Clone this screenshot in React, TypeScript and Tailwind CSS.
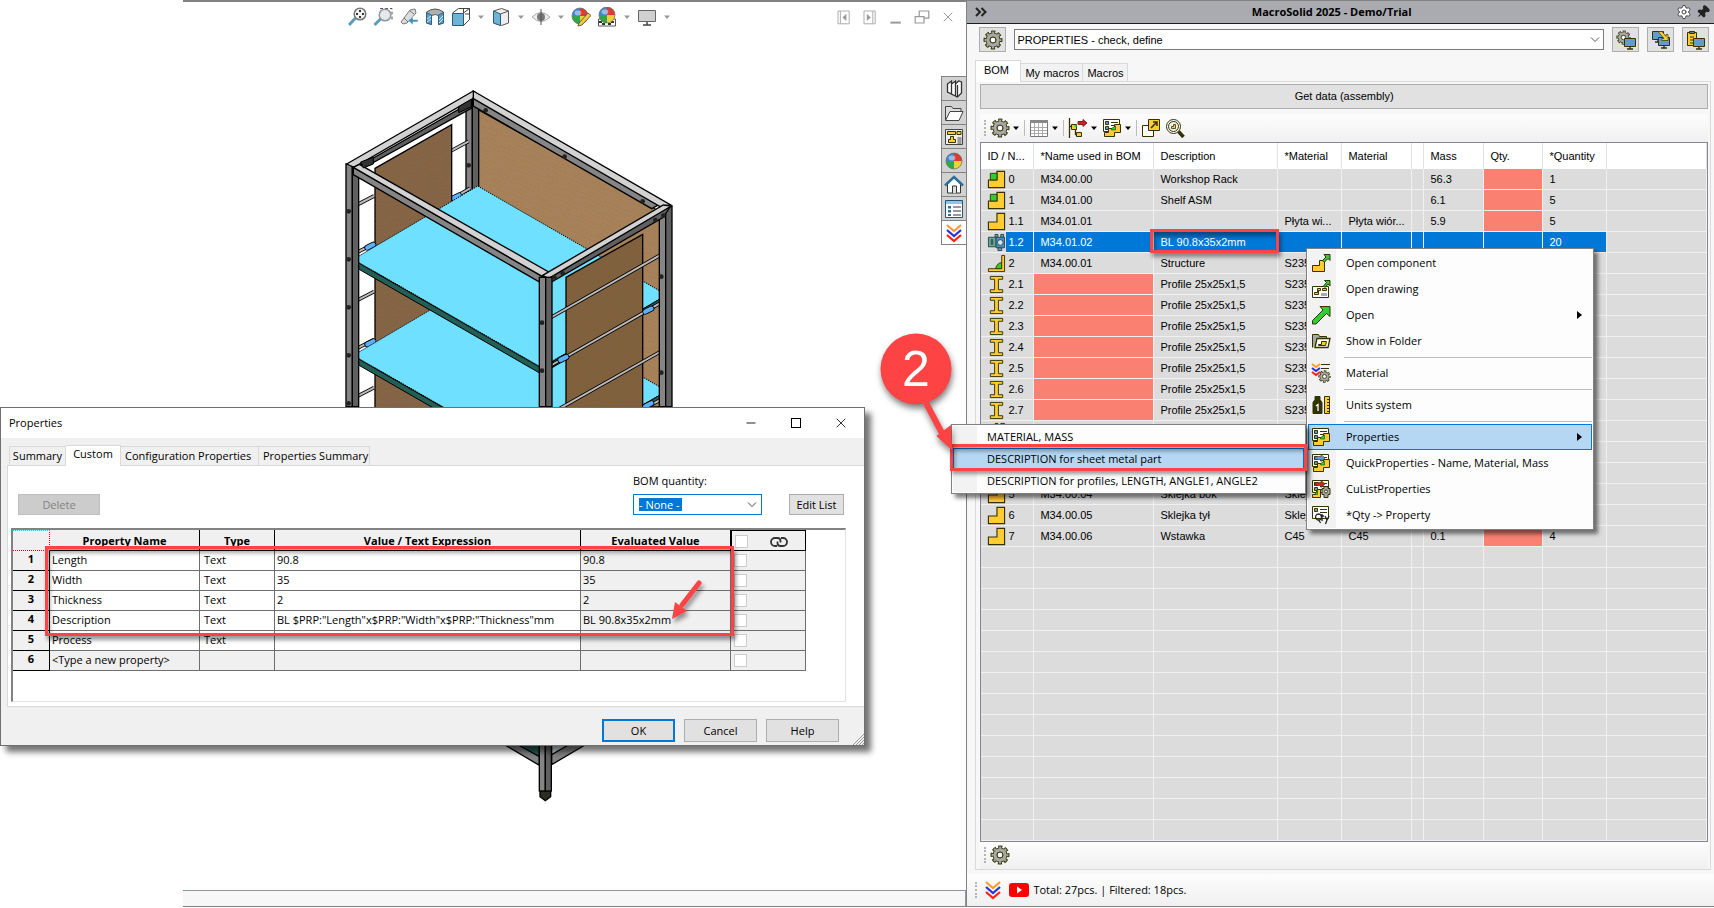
/**
 * CAD workspace: model view on the left, MacroSolid task pane docked on the right,
 * with the Properties window and the BOM context menu open above them.
 */
import type { ReactNode } from 'react';
import clsx from 'clsx';
import { Minus, Pin, Settings, X } from 'lucide-react';

const INK = '#333300';
const YELLOW = '#ffcc33';
const GREEN = '#33cc33';
const STEEL = '#6699cc';

function Icon({ children, className = 'size-5' }: { children: ReactNode; className?: string }) {
  return (
    <svg viewBox="0 0 20 20" className={clsx('shrink-0', className)} fill="none" stroke={INK} strokeWidth="1" aria-hidden="true">
      {children}
    </svg>
  );
}

/* ---------- shared glyphs ---------- */

function GearShape() {
  return (
    <g>
      <circle cx="10" cy="10" r="7.6" strokeWidth="3.8" strokeDasharray="3.8 2.17" strokeDashoffset="1.9" />
      <circle cx="10" cy="10" r="5" stroke={INK} strokeWidth="5" />
      <circle cx="10" cy="10" r="7.4" stroke="#a8a8a8" strokeWidth="2.2" strokeDasharray="2.1 3.71" strokeDashoffset="1.05" />
      <circle cx="10" cy="10" r="5" stroke="#a8a8a8" strokeWidth="3.4" />
      <circle cx="10" cy="10" r="2.9" fill="#fff" />
    </g>
  );
}

const GearIcon = ({ className }: { className?: string }) => <Icon className={className}><GearShape /></Icon>;

const Caret = ({ className = 'text-black' }: { className?: string }) => (
  <svg viewBox="0 0 8 8" className={clsx('size-2 shrink-0', className)} aria-hidden="true">
    <path d="M1 2.5h6L4 6z" fill="currentColor" />
  </svg>
);

const ChevronsIcon = ({ className }: { className?: string }) => (
  <Icon className={className}>
    <g strokeWidth="2.2">
      <path d="M3 2l7 6 7-6" stroke="#ff9933" />
      <path d="M3 7l7 6 7-6" stroke="#2233dd" />
      <path d="M3 12l7 6 7-6" stroke="#ff2211" />
    </g>
  </Icon>
);

const Monitor = ({ x, y }: { x: number; y: number }) => (
  <g transform={`translate(${x} ${y})`}>
    <path d="M.5.5h11v8H.5z" fill={STEEL} />
    <path d="M6 9v2M3 11h6" strokeWidth="1.4" />
  </g>
);

function Ball({ cx = 10, cy = 10, r = 8 }: { cx?: number; cy?: number; r?: number }) {
  return (
    <g stroke="none">
      <path d={`M${cx} ${cy}V${cy - r}A${r} ${r} 0 0 0 ${cx - r} ${cy}z`} fill="#4285d6" />
      <path d={`M${cx} ${cy}V${cy - r}A${r} ${r} 0 0 1 ${cx + r} ${cy}z`} fill="#dd3b30" />
      <path d={`M${cx} ${cy}H${cx - r}A${r} ${r} 0 0 0 ${cx} ${cy + r}z`} fill="#2fa84a" />
      <path d={`M${cx} ${cy}H${cx + r}A${r} ${r} 0 0 1 ${cx} ${cy + r}z`} fill="#f0cf3c" />
      <circle cx={cx} cy={cy} r={r} fill="none" stroke="#666" strokeWidth=".7" />
      <ellipse cx={cx - 2} cy={cy - 3} rx="3.4" ry="2.4" fill="#fff" opacity=".45" />
    </g>
  );
}

const PropertiesIcon = ({ arrow, profile }: { arrow?: string; profile?: boolean }) => (
  <Icon>
    <path d="M1.5 1.5h16v12h-16z" fill="#fff" />
    <path d="M3.5 3.5h3v3h-3zM3.5 8.5h3v3h-3z" fill={STEEL} />
    <path d="M9 4.5h7M9 7.5h5M9 10.5h4" />
    {arrow && <path d="M4 3.5h6v-2l4 3.5-4 3.5v-2H4z" fill={arrow} strokeWidth=".6" />}
    {profile ? (
      <>
        <path d="M6.5 10.5h3v8h-8v-3h3z" fill={YELLOW} />
        <path d="M3.5 15.5l3-4v4z" fill={GREEN} strokeWidth=".6" />
        <path d="M13 7.5h4v2h2v6h-2v3h-4v-3h-2v-6h2z" fill="#a8a8a8" />
        <circle cx="15" cy="12.5" r="1.5" fill="#fff" />
      </>
    ) : (
      <>
        <path d="M12.5 10.5v-4h6v8h-6v4h-10v-4h4v-4z" fill={YELLOW} />
        <path d="M9.5 10.5l4-2.5v4h-4z" fill={GREEN} strokeWidth=".6" />
      </>
    )}
  </Icon>
);

/* ---------- BOM row icons ---------- */

type RowKind = 'assembly' | 'part' | 'sheet' | 'structure' | 'profile' | 'cutlist';

function RowIcon({ kind }: { kind: RowKind }) {
  if (kind === 'profile') {
    return (
      <Icon className="size-[19px]">
        <path d="M3.5 1.5h13v3h-4.5v11h4.5v3h-13v-3H8v-11H3.5z" fill={YELLOW} />
      </Icon>
    );
  }
  if (kind === 'structure') {
    return (
      <Icon className="size-[19px]">
        <path d="M9 15.5c1-4 3-6 6.5-6.5v6.5z" fill={GREEN} />
        <path d="M1.5 15.5h14v-14h3v17h-17z" fill={YELLOW} />
      </Icon>
    );
  }
  if (kind === 'sheet') {
    return (
      <Icon className="size-[19px]">
        <path d="M8.5 1.5h3v3h-3zM14.5 1.5h3v3h-3zM11.5 15.5h4v3h-4z" fill="#6fa88a" stroke="#234a5a" />
        <path d="M1.5 4.5h8v10h-8z" fill="#6fa88a" stroke="#234a5a" />
        <path d="M9.5 4.5h9v11h-9z" fill="#4a8fc0" stroke="#234a5a" />
        <circle cx="14" cy="10" r="3" fill="#d8e4ea" stroke="#234a5a" />
        <path d="M4.5 7v5H6V7z" stroke="#234a5a" />
      </Icon>
    );
  }
  if (kind === 'cutlist') {
    return (
      <Icon className="size-[19px]">
        <path d="M8.5 1.5h3v4h3v-4h4v8h-10z" fill="#a8a8a8" />
      </Icon>
    );
  }
  return (
    <Icon className="size-[19px]">
      <path d="M10.5 1.5h8v17h-17v-8h9z" fill={YELLOW} strokeWidth="1.2" />
      {kind === 'assembly' && <path d="M3.5 3.5h7v7h-7z" fill={GREEN} />}
    </Icon>
  );
}

/* ---------- model view ---------- */

function Rack() {
  const shelf = (dy: number) => (
    <g transform={`translate(0 ${dy})`}>
      <path d="M70 538L443 318L990 633V657L634 862z" fill="#6fe0ff" strokeWidth="3" strokeDasharray="4 3" />
      <path d="M70 540L634 864V882L70 558z" fill="#235f55" strokeWidth="3" />
      <path d="M634 864L990 657V673L634 882z" fill="#235f55" strokeWidth="3" />
    </g>
  );
  const rod = (x1: number, y1: number, x2: number, y2: number) => (
    <g>
      <path d={`M${x1} ${y1}L${x2} ${y2}`} strokeWidth="11" />
      <path d={`M${x1} ${y1}L${x2} ${y2}`} stroke="#bcbcbc" strokeWidth="6" />
    </g>
  );
  const clip = (x: number, y: number) => (
    <g strokeLinecap="round">
      <path d={`M${x - 9} ${y + 5}l18 -9`} strokeWidth="18" />
      <path d={`M${x - 9} ${y + 5}l18 -9`} stroke="#5cb0ff" strokeWidth="13" />
    </g>
  );
  const post = (x: number, top: number, w = 38, h = 980 - top) => (
    <g strokeWidth="4">
      <rect x={x} y={top} width={w / 2} height={h} fill="#858585" />
      <rect x={x + w / 2} y={top} width={w / 2} height={h} fill="#606060" />
    </g>
  );
  const grain = 'M0 6q18 -5 36 0t34 0M8 18q20 4 44 0M0 29q14 -4 30 0t40 0';
  return (
    <svg viewBox="45 27 990 2160" className="h-[720px] w-[330px]" stroke="#000" fill="none" aria-label="Workshop rack model" role="img">
      <defs>
        <pattern id="grain" width="70" height="36" patternUnits="userSpaceOnUse" patternTransform="rotate(-14)">
          <path d={grain} stroke="#8a5018" strokeWidth="3" strokeDasharray="9 5" opacity=".32" />
        </pattern>
        <pattern id="grainBack" width="70" height="36" patternUnits="userSpaceOnUse" patternTransform="rotate(22)">
          <path d={grain} stroke="#b0651c" strokeWidth="3" strokeDasharray="9 5" opacity=".35" />
        </pattern>
        <clipPath id="upper"><path d="M45 27H1035V983H45z" /></clipPath>
      </defs>
      <path d="M445 90L990 395V980H445z" fill="#a5825c" strokeWidth="3" />
      <path d="M445 90L990 395V980H445z" fill="url(#grainBack)" stroke="none" />
      {post(408, 60)}
      {rod(340, 225, 416, 184)}
      {rod(340, 372, 420, 325)}
      {clip(378, 350)}
      <g clipPath="url(#upper)">
        <path d="M135 265L365 134V1000H135z" fill="#856547" strokeWidth="4" />
        <path d="M135 265L365 134V1000H135z" fill="url(#grain)" stroke="none" />
        {[375, 518, 662, 806, 950].map((y) => <g key={y}>{rod(80, y, 132, y - 27)}</g>)}
        {clip(121, 498)}
        {clip(121, 788)}
        {shelf(288)}
        {shelf(0)}
        <path d="M708 592L938 463V983H708z" fill="#80613f" strokeWidth="4" />
        <path d="M708 592L938 463V983H708z" fill="url(#grain)" stroke="none" />
        {rod(660, 714, 1000, 520)}
        {rod(660, 858, 1000, 664)}
        {rod(660, 1002, 1000, 810)}
        {rod(930, 992, 1000, 955)}
        {clip(700, 835)}
        {clip(955, 690)}
        {clip(955, 974)}
      </g>
      {post(48, 252)}
      {post(988, 380)}
      <g strokeWidth="4">
        <path d="M88 258L425 66V84L100 264z" fill="#606060" />
        <path d="M50 252L430 33L446 46L72 262z" fill="#d2d2d2" />
        <path d="M430 54L985 375L965 386L430 78z" fill="#858585" />
        <path d="M430 33L1022 375L990 380L430 56z" fill="#d2d2d2" />
        <path d="M70 262L638 590L630 607L70 284z" fill="#858585" />
        <path d="M70 262L88 253L660 578L638 590z" fill="#d2d2d2" />
        <path d="M655 595L1022 378L1000 412L665 606z" fill="#606060" />
        <path d="M638 586L1000 375L1024 378L655 596z" fill="#d2d2d2" />
      </g>
      {post(628, 592)}
      <path d="M386 80l38 -22v22l-38 18zM92 246l38 -14v20l-30 12z" fill="#333" strokeWidth="3" />
      <g fill="#222" stroke="none">
        {[[56, 394], [56, 538], [56, 682], [56, 826], [56, 970], [636, 728], [636, 872], [994, 590], [994, 878], [416, 256], [467, 91], [704, 230], [938, 364], [976, 420], [1000, 407], [698, 580], [673, 592]].map(([x, y]) => (
          <circle key={`${x}-${y}`} cx={x} cy={y} r="7" />
        ))}
      </g>
      {/* front foot, below the Properties window */}
      <g strokeWidth="4">
        <path d="M520 1992L628 2056V2024L560 1992z" fill="#858585" />
        <path d="M560 1992L628 2030V1992z" fill="#235f55" />
        <path d="M665 1992H770L665 2054z" fill="#858585" />
        <path d="M665 1992H720L665 2024z" fill="#cfd8dc" />
        <path d="M630 2130h32v20l-16 12 -16 -12z" fill="#2c2f20" />
      </g>
      {post(628, 1985, 36, 148)}
    </svg>
  );
}

const FadedCaret = () => <Caret className="text-[#9a9a9a]" />;

function ViewToolbar() {
  return (
    <div className="flex items-center gap-1.5 pt-[5px] pl-[164px] text-[#9a9a9a]">
      <Icon>
        <circle cx="13" cy="7" r="5.8" fill="#f4f4f4" stroke="#777" strokeWidth="1.5" />
        <path d="M13 3v8M9 7h8" stroke="#333" strokeDasharray="2 4" strokeWidth="2" />
        <path d="M8.5 11L2 18" stroke="#5a9cc0" strokeWidth="3" />
      </Icon>
      <Icon>
        <path d="M7 1.5h12v12" stroke="#555" strokeDasharray="3 2" />
        <circle cx="12" cy="8" r="5.8" fill="#e4e9ec" stroke="#999" strokeWidth="1.5" />
        <path d="M7.5 12L1.5 18" stroke="#5a9cc0" strokeWidth="3" />
      </Icon>
      <Icon>
        <path d="M2 15l9-12 5-1 1 4-9 10-4 1z" fill="#ddd" stroke="#777" />
        <path d="M5 11l4 4M11 4l4 3" stroke="#777" />
        <path d="M19 15h-5v3l-5-4.5 5-4v3h5z" fill="#4a93b8" stroke="#fff" strokeWidth=".5" />
      </Icon>
      <Icon>
        <path d="M1.5 5Q10-1 18.5 5v11l-5 1.5v-9q-3-2-7 0v9l-5-1.5z" fill="#b0b0b0" stroke="#555" />
        <path d="M1.5 5.5l5 2.5v9.5l-5-1.5zM13.5 8l5-2.5V16l-5 1.5z" fill="#4fa0cc" stroke="#30637f" />
        <path d="M2 12l4-3M2 15l4-3M14 13l4-4M14 16l4-4" stroke="#d8eef8" />
      </Icon>
      <Icon>
        <path d="M7.5 1.5h11v11M1.5 6l6-4.500M12.5 6l6-4.500M18.5 12.5l-6 6M12.5 1.5v5M14 7h4.5" stroke="#444" />
        <path d="M1.5 6.5h11v12h-11z" fill="#6fb4d6" stroke="#285c7a" />
      </Icon>
      <FadedCaret />
      <Icon>
        <path d="M2.5 4l8-2.5 7 2.5v12l-7 2.5-8-2.5z" fill="#eee" stroke="#555" />
        <path d="M2.5 4l7 3v11.5l-7-2.5z" fill="#6fb4d6" stroke="#285c7a" />
        <path d="M9.5 7l8-3" stroke="#555" />
      </Icon>
      <FadedCaret />
      <Icon>
        <path d="M1 10q9-9 18 0q-9 9-18 0z" fill="#ededed" stroke="#aaa" />
        <circle cx="10" cy="10" r="4" fill="#777" stroke="none" />
        <path d="M10 2v16" stroke="#555" />
      </Icon>
      <FadedCaret />
      <Icon>
        <Ball cx={9} cy={9} r={8} />
        <path d="M8 16l9-10 3 2.5-9 9.5-4 1z" fill="#f5c842" stroke="#444" strokeWidth=".8" />
      </Icon>
      <Icon>
        <path d="M1.5 12h17v7h-17z" fill="#fff" stroke="#555" />
        <path d="M2 14h3v2H2zM8 14h3v2H8zM14 14h3v2h-3zM5 16h3v2H5zM11 16h3v2h-3z" fill="#333" stroke="none" />
        <Ball cx={10} cy={8} r={8} />
      </Icon>
      <FadedCaret />
      <Icon>
        <path d="M1.5 3.5h17v11h-17z" fill="#d0d0d0" stroke="#666" />
        <path d="M10 15v3M6 18h8" stroke="#444" strokeWidth="1.5" />
      </Icon>
      <FadedCaret />

      <div className="ml-auto flex items-center gap-2.5 pr-2.5">
        <Icon className="size-4"><path d="M2.5 2.5h14v16h-14zM5.5 3v15" stroke="#999" /><path d="M13 6l-5 4.5 5 4.5z" fill="#999" stroke="none" /></Icon>
        <Icon className="size-4"><path d="M2.5 2.5h14v16h-14zM13.5 3v15" stroke="#999" /><path d="M6 6l5 4.5-5 4.5z" fill="#999" stroke="none" /></Icon>
        <Icon className="size-4"><path d="M3 17h13" stroke="#999" strokeWidth="2.5" /></Icon>
        <Icon className="size-4"><path d="M1.5 9.5h11v8h-11zM6.5 9V2.5h12v9H13" stroke="#999" strokeWidth="1.5" /></Icon>
        <X className="size-4" strokeWidth={1.5} />
      </div>
    </div>
  );
}

const sideTabs: { name: string; icon: ReactNode }[] = [
  { name: 'Design Library', icon: <Icon><path d="M3.5 5l4-3v13l-4-2zM7.5 5l4-3v15l-4-2zM11.5 5l3-3 3 1v11l-4 4-2-1zM13.5 6v12" fill="#fff" stroke="#333" strokeWidth="1.3" /></Icon> },
  { name: 'File Explorer', icon: <Icon><path d="M1.5 17V3.5h6l1.5 2h8V8" fill="#ddd" stroke="#444" /><path d="M1.5 17.5L6 8.5h13L15 17.5z" fill="#fff" stroke="#444" /></Icon> },
  { name: 'View Palette', icon: <Icon><path d="M1.5 2.5h17v15h-17z" fill="#eee" stroke="#444" /><path d="M3.5 4.500h8v3h-8zM13 4.500h4v3h-4zM6.5 9.500h3v3h2v3h-7v-3h2z" fill={YELLOW} /><path d="M13.5 10h4v7h-4z" fill="#999" stroke="none" /></Icon> },
  { name: 'Appearances', icon: <Icon><Ball /></Icon> },
  { name: 'Home', icon: <Icon><path d="M3.5 9v9h13V9L10 3z" fill="#fff" stroke="#333" /><path d="M8.5 18v-7h4v7" fill="#ddd" stroke="#333" /><path d="M1 10.5l9-8.5 9 8.5" stroke="#2d6f99" strokeWidth="2.5" /></Icon> },
  { name: 'Custom Properties', icon: <Icon><path d="M1.5 1.5h17v17h-17z" fill="#fff" stroke="#28536e" /><path d="M2 2h16v3H2z" fill="#8cc8e6" stroke="none" /><path d="M4 7h3v2.5H4zM4 11h3v2.5H4zM4 15h3v2H4z" fill="#2d6f99" stroke="none" /><path d="M9 8h8M9 12h8M9 16h8" stroke="#333" /></Icon> },
  { name: 'MacroSolid', icon: <ChevronsIcon /> },
];

function ModelView() {
  return (
    <section className="min-w-0 flex-[967]">
      <div className="flex h-full flex-col pl-[183px]">
        <div className="flex flex-1 flex-col border-t-2 border-[#828282]">
          <ViewToolbar />
          <div className="flex flex-1 items-start">
            <div className="h-0 flex-1 pt-[62px] pl-[162px]"><Rack /></div>
            <nav className="mt-[49px] w-[25px] border-t border-l border-[#828282]" aria-label="Task panes">
              {sideTabs.map((tab) => (
                <button
                  key={tab.name}
                  aria-label={tab.name}
                  className={clsx(
                    'flex h-6 w-full items-center justify-center border-b border-[#828282]',
                    tab.name === 'MacroSolid' ? 'bg-white' : 'bg-[#d2d2d2]',
                  )}
                >
                  {tab.icon}
                </button>
              ))}
            </nav>
          </div>
        </div>
        <div className="h-4 border-t border-r border-[#8a9a9a] bg-[#f7f7f7]" />
      </div>
    </section>
  );
}

/* ---------- task pane ---------- */

interface BomRow {
  id: string;
  kind: RowKind;
  name?: string;
  description?: string;
  material?: string;
  material2?: string;
  mass?: string;
  qtyMissing?: boolean;
  quantity?: string;
}

const profiles: BomRow[] = ['2.1', '2.2', '2.3', '2.4', '2.5', '2.6', '2.7'].map((id) => ({
  id, kind: 'profile', description: 'Profile 25x25x1,5', material: 'S235',
}));

const rows: BomRow[] = [
  { id: '0', kind: 'assembly', name: 'M34.00.00', description: 'Workshop Rack', mass: '56.3', qtyMissing: true, quantity: '1' },
  { id: '1', kind: 'assembly', name: 'M34.01.00', description: 'Shelf ASM', mass: '6.1', qtyMissing: true, quantity: '5' },
  { id: '1.1', kind: 'part', name: 'M34.01.01', material: 'Płyta wi...', material2: 'Płyta wiór...', mass: '5.9', qtyMissing: true, quantity: '5' },
  { id: '1.2', kind: 'sheet', name: 'M34.01.02', description: 'BL 90.8x35x2mm', quantity: '20' },
  { id: '2', kind: 'structure', name: 'M34.00.01', description: 'Structure', material: 'S235' },
  ...profiles,
  { id: '', kind: 'cutlist' },
  { id: '', kind: 'part' },
  { id: '', kind: 'part' },
  { id: '5', kind: 'part', name: 'M34.00.04', description: 'Sklejka bok', material: 'Sklejka' },
  { id: '6', kind: 'part', name: 'M34.00.05', description: 'Sklejka tył', material: 'Sklejka' },
  { id: '7', kind: 'part', name: 'M34.00.06', description: 'Wstawka', material: 'C45', material2: 'C45', mass: '0.1', qtyMissing: true, quantity: '4' },
];

const SELECTED = '1.2';
const EMPTY_ROWS = 14;

function BomTable() {
  const td = 'h-[21px] border-r border-b border-[#f0f0f0] overflow-hidden whitespace-nowrap p-0 pl-1.5';
  return (
    <table className="w-full table-fixed border-separate border-spacing-0 bg-[#dcdcdc] text-left text-[11px] leading-4">
      <colgroup>
        <col className="w-[53px]" /><col className="w-[120px]" /><col className="w-[124px]" /><col className="w-16" />
        <col className="w-[70px]" /><col className="w-3" /><col className="w-[60px]" /><col className="w-[59px]" />
        <col className="w-16" /><col />
      </colgroup>
      <thead>
        <tr>
          {['ID / N...', '*Name used in BOM', 'Description', '*Material', 'Material', '', 'Mass', 'Qty.', '*Quantity', ''].map((h, i) => (
            <th key={i} className="h-[26px] border-r border-[#e2e2e2] bg-white p-0 pl-1.5 font-normal whitespace-nowrap">{h}</th>
          ))}
        </tr>
      </thead>
      <tbody>
        {rows.map((r, i) => {
          const sel = r.id === SELECTED;
          const cell = clsx(td, sel && 'bg-[#0078d7] text-white');
          return (
            <tr key={i}>
              <td className={td}>
                <div className="flex h-5 items-center">
                  <RowIcon kind={r.kind} />
                  <span className={clsx('flex h-5 flex-1 items-center pl-0.5', sel && 'bg-[#0078d7] text-white')}>{r.id}</span>
                </div>
              </td>
              <td className={clsx(cell, r.kind === 'profile' && 'bg-[#fa8072]')}>{r.name}</td>
              <td className={clsx(cell, sel && 'relative overflow-visible!')}>
                {r.description}
                {sel && (
                  <span className="absolute -top-[3px] -right-0.5 -bottom-px -left-1 border-3 border-[#fd4343] shadow-[2px_4px_4px_rgba(0,0,0,0.4),inset_2px_4px_4px_rgba(0,0,0,0.4)]" />
                )}
              </td>
              <td className={cell}>{r.material}</td>
              <td className={cell}>{r.material2}</td>
              <td className={cell} />
              <td className={cell}>{r.mass}</td>
              <td className={clsx(cell, r.qtyMissing && 'bg-[#fa8072]')} />
              <td className={cell}>{r.quantity}</td>
              <td className={td} />
            </tr>
          );
        })}
        {Array.from({ length: EMPTY_ROWS }, (_, i) => (
          <tr key={i}>
            {Array.from({ length: 10 }, (_, c) => <td key={c} className={td} />)}
          </tr>
        ))}
      </tbody>
    </table>
  );
}

const Grip = () => <span className="h-4 w-0 border-l-2 border-dotted border-[#b4b4b4]" />;
const Divider = () => <span className="h-4 w-px bg-[#bdbdbd]" />;

function BomToolbar() {
  const button = 'flex items-center gap-0.5';
  return (
    <div className="flex h-7 items-center gap-1 bg-linear-to-b from-[#fdfdfd] to-[#f0f0f0] pb-px pl-1">
      <Grip />
      <button className={button} aria-label="Options"><GearIcon /><Caret /></button>
      <Divider />
      <button className={button} aria-label="Columns">
        <Icon>
          <path d="M1.5 2.5h17v16h-17z" fill="#fff" stroke="#777" />
          <path d="M1 2h18v3H1z" fill="#888" stroke="none" />
          <path d="M5.5 5v13M9.5 5v13M13.5 5v13M2 9.5h16M2 12.5h16M2 15.5h16" stroke="#aaa" />
        </Icon>
        <Caret />
      </button>
      <Divider />
      <button className={button} aria-label="Structure">
        <Icon>
          <path d="M1.5 0v20M2 8.5h3M7.5 10v6.5h2" strokeWidth="1.3" />
          <path d="M3.5 6.5h5v5h-5zM8.5 14.5h5v4h-5z" fill={YELLOW} />
          <path d="M10 3.5h5V1.5l4 3.5-4 3.5V6.5h-5z" fill="#cc2222" stroke="#802020" />
          <path d="M5.5 8l3-1.5v3z" fill={GREEN} stroke="none" />
        </Icon>
        <Caret />
      </button>
      <button className={button} aria-label="Properties"><PropertiesIcon /><Caret /></button>
      <Divider />
      <button aria-label="Open">
        <Icon>
          <path d="M1.5 7.5h11v11h-11z" fill="#fff" />
          <path d="M7.5 1.5h11v11h-11z" fill={YELLOW} />
          <path d="M10 10l6-6M12 4h4v4" strokeWidth="1.6" />
        </Icon>
      </button>
      <button aria-label="Find">
        <Icon>
          <circle cx="8.5" cy="8.5" r="7" fill="#fff" />
          <circle cx="8.5" cy="8.5" r="5" fill="#f2f2f2" />
          <path d="M8.5 6.5h2v4h-4v-2h2z" fill={YELLOW} strokeWidth=".8" />
          <path d="M13.5 13.5l5 5.5" strokeWidth="3.5" />
        </Icon>
      </button>
    </div>
  );
}

function TaskPane() {
  const square = 'flex h-[25px] w-[27px] shrink-0 items-center justify-center border border-[#adadad] bg-[#e1e1e1]';
  const tab = 'border border-b-0 border-[#d9d9d9] px-1 whitespace-nowrap';
  return (
    <aside className="flex min-w-0 flex-[747] flex-col border-t border-l border-[#828282] bg-[#f7f7f7]">
      <header className="flex h-[23px] items-center border-b border-[#1c1c1c] bg-[#a9abb0] px-1 font-['Open_Sans',sans-serif]">
        <button aria-label="Collapse" className="pl-1">
          <svg viewBox="0 0 12 10" className="h-2.5 w-3" fill="none" stroke="#222" strokeWidth="2"><path d="M1 1l4 4-4 4M6.5 1l4 4-4 4" /></svg>
        </button>
        <h1 className="flex-1 text-center text-[11px] font-bold">MacroSolid 2025 - Demo/Trial</h1>
        <Settings className="size-4 fill-white text-[#444]" strokeWidth={1.5} />
        <Pin className="ml-1 size-3.5 rotate-45 fill-[#222] text-[#222]" />
      </header>

      <div className="flex items-center gap-2 pt-[3px] pr-[5px] pb-1 pl-3">
        <button className={square} aria-label="Settings"><GearIcon /></button>
        <div className="relative min-w-0 flex-1">
          <select aria-label="Macro group" className="block h-[21px] w-full appearance-none border border-[#7a7a7a] bg-white px-0.5 text-[11px] leading-4">
            <option>PROPERTIES - check, define</option>
          </select>
          <svg viewBox="0 0 10 6" className="pointer-events-none absolute top-2 right-1 h-1.5 w-2.5" fill="none" stroke="#555"><path d="M1 .5l4 4 4-4" /></svg>
        </div>
        <button className={square} aria-label="Screen settings">
          <Icon><g transform="scale(.75)"><GearShape /></g><Monitor x={8} y={8} /></Icon>
        </button>
        <button className={square} aria-label="Copy to screen">
          <Icon><Monitor x={1} y={1} /><Monitor x={7} y={7} /><path d="M7 1.500h4l4 5V4.500h2v6h-6v-2h2z" fill={YELLOW} strokeWidth=".7" /></Icon>
        </button>
        <button className={square} aria-label="Paste to screen">
          <Icon><path d="M1.5 2.5h9v13h-9z" fill={YELLOW} /><path d="M3.5 1.5h5v2h-5z" fill="#777" /><path d="M4 7h4M4 10h4M4 13h4" /><Monitor x={7} y={8} /></Icon>
        </button>
      </div>

      <div className="flex items-end pt-1 pl-2 text-[11px] leading-[18px]" role="tablist">
        <button role="tab" className={clsx(tab, 'z-10 -mb-px h-[22px] w-[46px] bg-white pb-1 pr-2')}>BOM</button>
        <button role="tab" className={clsx(tab, 'h-[18px] w-[62px] border-l-0 bg-[#f2f2f2]')}>My macros</button>
        <button role="tab" className={clsx(tab, 'h-[18px] w-[45px] border-l-0 bg-[#f2f2f2]')}>Macros</button>
      </div>

      <div className="mr-[3px] ml-2 flex flex-1 flex-col border border-[#d9d9d9] bg-[#f7f7f7] pt-0.5 pr-0.5 pl-1">
        <button className="h-[25px] border border-[#adadad] bg-[#e1e1e1] text-[11px]">Get data (assembly)</button>
        <div className="mt-[5px]"><BomToolbar /></div>
        <div className="min-h-0 flex-1 overflow-hidden border border-[#828790] bg-[#dcdcdc]">
          <BomTable />
        </div>
        <div className="flex h-[27px] items-center gap-1 bg-linear-to-b from-[#fdfdfd] to-[#f0f0f0] pb-0.5 pl-1">
          <Grip />
          <button aria-label="Table options"><GearIcon /></button>
        </div>
      </div>

      <footer className="mt-1 flex h-8 items-center gap-1 bg-linear-to-b from-[#fdfdfd] to-[#f0f0f0] pl-2 font-['Open_Sans',sans-serif] text-[11px]">
        <Grip />
        <span className="flex w-6 justify-center"><ChevronsIcon /></span>
        <svg viewBox="0 0 20 14" className="h-3.5 w-5" aria-hidden="true"><rect width="20" height="14" rx="3" fill="#f00" /><path d="M8 3.5l5 3.5-5 3.5z" fill="#fff" /></svg>
        <span>Total: 27pcs. | Filtered: 18pcs.</span>
      </footer>
    </aside>
  );
}

/* ---------- context menu ---------- */

const SEP = null;

const menuItems: ({ label: string; icon: ReactNode; more?: boolean } | null)[] = [
  { label: 'Open component', icon: <Icon><path d="M8.5 7.5h5v11h-12v-6h7z" fill={YELLOW} /><path d="M11.5 7.5l3.5-3.5-2-2.5h6v6l-2-2-3.5 3.5z" fill={GREEN} /></Icon> },
  { label: 'Open drawing', icon: <Icon><path d="M1.5 7.5h16v11h-16z" fill="#fff" /><path d="M6.5 9.5h3v2h-2v4h-4v-2h3zM11.5 9.5h4v2h-4z" fill={YELLOW} /><path d="M10 14h6v3h-6z" fill="#aaa" stroke="none" /><path d="M12.5 7l3-3.5-2-2h5.5v5.5l-2-2-3 3.5z" fill={GREEN} /></Icon> },
  { label: 'Open', icon: <Icon><path d="M1.5 15.5L12 5 9 1.5h10v10L15.500 8.500 5 19H1.500z" fill={GREEN} /></Icon>, more: true },
  { label: 'Show in Folder', icon: <Icon><path d="M1.5 16.5v-13h6l1 2h7v3" fill="#a8a8a8" /><path d="M4 16.5l2-9h13l-2 9z" fill="#fff" strokeWidth="1.3" /><path d="M7.5 13.5h3v-3h5l-1 4h-7z" fill={YELLOW} /></Icon> },
  SEP,
  { label: 'Material', icon: <Icon><g strokeWidth="2"><path d="M1 1l4 3 4-3" stroke="#ff9933" /><path d="M1 5l4 3 4-3" stroke="#2233dd" /><path d="M1 9l4 3 4-3" stroke="#ff2211" /></g><path d="M10 1.5h9M10 5.5h8" /><g transform="translate(7 7) scale(.65)"><GearShape /></g></Icon> },
  SEP,
  { label: 'Units system', icon: <Icon><path d="M4 1.5h5v3l2 3v11H2v-11l2-3z" fill={INK} /><path d="M5 11l2-1.500V16" stroke="#fff" strokeWidth="1.3" /><path d="M13.5 1.5h5v17h-5z" fill={YELLOW} /><path d="M16 4.5h2M16 7.5h2M16 10.5h2M16 13.5h2M16 16.5h2" /></Icon> },
  SEP,
  { label: 'Properties', icon: <PropertiesIcon />, more: true },
  { label: 'QuickProperties - Name, Material, Mass', icon: <PropertiesIcon arrow={STEEL} /> },
  { label: 'CuListProperties', icon: <PropertiesIcon arrow="#cc2222" profile /> },
  { label: '*Qty -> Property', icon: <Icon><path d="M1.5 1.5h16v12h-16z" fill="#fff" /><path d="M3.5 3.5h3v3h-3z" fill="#999" /><path d="M9 4.5h7M9 7.5h7" /><path d="M7.5 15a3 3 0 1 1 .1 0l2 3M11 9v7M9.5 11h3.5M14 11l2 4 2-4M16 15l-1.5 4" stroke="#222" strokeWidth="1.3" /></Icon> },
];

const menuBox = 'absolute z-20 border border-[#808080] bg-[#fdfdfd] p-px font-[\'Open_Sans\',sans-serif] text-[11px] leading-4 shadow-[4px_4px_4px_rgba(0,0,0,0.5)]';

function ContextMenu() {
  return (
    <ul role="menu" className={clsx(menuBox, 'top-[248px] left-[1306px] w-[288px]')}>
      {menuItems.map((item, i) => {
        if (!item) {
          return (
            <li key={i} role="separator" className="flex h-1.5">
              <span className="w-7 bg-[#f2f2f2]" />
              <span className="my-auto ml-2 h-px flex-1 bg-[#bdbdbd]" />
            </li>
          );
        }
        const active = item.label === 'Properties';
        return (
          <li key={i}>
            <button role="menuitem" className={clsx('flex h-[26px] w-full items-center text-left', active && 'bg-[#b5d7f3] outline-1 -outline-offset-1 outline-[#0078d7]')}>
              <span className={clsx('flex h-full w-7 items-center pl-[3px]', !active && 'bg-[#f2f2f2]')}>{item.icon}</span>
              <span className="flex-1 pl-2.5">{item.label}</span>
              {item.more && <svg viewBox="0 0 5 8" className="mr-2.5 h-2 w-[5px]"><path d="M0 0l5 4-5 4z" /></svg>}
            </button>
          </li>
        );
      })}
    </ul>
  );
}

function SubMenu() {
  const labels = ['MATERIAL, MASS', 'DESCRIPTION for sheet metal part', 'DESCRIPTION for profiles, LENGTH, ANGLE1, ANGLE2'];
  return (
    <ul role="menu" className={clsx(menuBox, 'top-[424px] left-[951px] w-[355px]')}>
      {labels.map((label, i) => (
        <li key={label}>
          <button role="menuitem" className={clsx('flex h-[22px] w-full items-center text-left', i === 1 && 'bg-[#b5d7f3] outline-1 -outline-offset-1 outline-[#0078d7]')}>
            <span className={clsx('h-full w-6', i !== 1 && 'bg-[#f2f2f2]')} />
            <span className="pl-2.5">{label}</span>
          </button>
        </li>
      ))}
      <li role="presentation" className="absolute -top-px right-0 left-0">
        <span className="absolute top-5 -right-0.5 -left-0.5 h-[27px] border-3 border-[#fd4343] shadow-[2px_3px_4px_rgba(0,0,0,0.4),inset_2px_4px_4px_rgba(0,0,0,0.35)]" />
      </li>
    </ul>
  );
}

function StepMarker() {
  return (
    <div className="absolute top-[333px] left-[880px] z-30">
      <svg viewBox="0 0 72 118" className="absolute top-0 left-0 h-[118px] w-[72px] drop-shadow-[1px_4px_3px_rgba(0,0,0,0.5)]" aria-hidden="true">
        <circle cx="36" cy="36" r="35.5" fill="#fd4343" />
        <path d="M46 70l17 32" stroke="#fd4343" strokeWidth="6" />
        <path d="M58 103l12 -9 1 21z" fill="#fd4343" stroke="#fd4343" strokeWidth="2" />
      </svg>
      <span className="relative flex size-[72px] items-center justify-center text-[50px] text-white">2</span>
    </div>
  );
}

/* ---------- Properties window ---------- */

const properties = [
  { name: 'Length', type: 'Text', value: '90.8', evaluated: '90.8' },
  { name: 'Width', type: 'Text', value: '35', evaluated: '35' },
  { name: 'Thickness', type: 'Text', value: '2', evaluated: '2' },
  { name: 'Description', type: 'Text', value: 'BL $PRP:"Length"x$PRP:"Width"x$PRP:"Thickness"mm', evaluated: 'BL 90.8x35x2mm' },
  { name: 'Process', type: 'Text', value: '', evaluated: '' },
  { name: '<Type a new property>', type: '', value: '', evaluated: '' },
];

function PropertiesTable() {
  const th = 'h-[21px] overflow-hidden border-r border-b border-black bg-[#f0f0f0] p-0 pt-0.5 font-bold';
  const td = 'h-5 border-r border-b border-[#6e6e6e] p-0 pb-px pl-0.5 leading-4 whitespace-nowrap';
  const box = 'block size-[13px] appearance-none border border-[#cccccc] bg-white';
  return (
    <table className="w-[793px] table-fixed border-separate border-spacing-0 text-left text-[11px] leading-4">
      <colgroup>
        <col className="w-[37px]" /><col className="w-[150px]" /><col className="w-[75px]" />
        <col className="w-[306px]" /><col className="w-[150px]" /><col className="w-[75px]" />
      </colgroup>
      <thead>
        <tr className="text-center">
          <th className="h-[21px] border-t border-r border-b border-dotted border-t-[#00d0e0] border-r-[#e00000] border-b-[#e00000] bg-[#f0f0f0] p-0" />
          <th className={th}>Property Name</th>
          <th className={th}>Type</th>
          <th className={th}>Value / Text Expression</th>
          <th className={th}>Evaluated Value</th>
          <th className={clsx(th, 'border-t border-l')}>
            <div className="flex items-center pl-[3px]">
              <input type="checkbox" aria-label="Link all" className={box} />
              <svg viewBox="0 0 18 10" className="ml-[22px] h-2.5 w-[18px]" fill="none" stroke="#333" strokeWidth="1.8" aria-hidden="true">
                <path d="M7 9H5a4 4 0 0 1 0-8h2.500q3 0 3 3v1.500M11 1h2a4 4 0 0 1 0 8h-2.500q-3 0-3-3V4.500" />
              </svg>
            </div>
          </th>
        </tr>
      </thead>
      <tbody>
        {properties.map((p, i) => {
          const last = i === properties.length - 1;
          return (
            <tr key={p.name}>
              <th className="h-5 border-r border-b border-black bg-[#f0f0f0] p-0 pb-1 text-center leading-[14px] font-bold">{i + 1}</th>
              <td className={clsx(td, last && 'bg-[#f0f0f0]')}>{p.name}</td>
              <td className={clsx(td, 'pl-[4px]!', last && 'bg-[#f0f0f0]')}>{p.type}</td>
              <td className={clsx(td, last && 'bg-[#f0f0f0]')}>{p.value}</td>
              <td className={clsx(td, 'bg-[#f0f0f0]')}>{p.evaluated}</td>
              <td className={clsx(td, 'bg-[#f0f0f0] pl-[3px]!')}>
                <input type="checkbox" aria-label={`Link ${p.name}`} className={box} />
              </td>
            </tr>
          );
        })}
      </tbody>
    </table>
  );
}

function PropertiesWindow() {
  const tab = 'h-[19px] border border-b-0 border-[#d9d9d9] bg-[#f0f0f0] whitespace-nowrap';
  const button = 'border border-[#adadad] bg-[#e1e1e1] text-center';
  return (
    <div
      role="dialog"
      aria-label="Properties"
      className="absolute top-[407px] left-0 z-20 w-[865px] border border-[#707070] bg-[#f0f0f0] font-['Open_Sans',sans-serif] text-[11px] leading-4 shadow-[6px_6px_6px_rgba(0,0,0,0.55)]"
    >
      <div className="flex h-[30px] items-center bg-white pl-2">
        <span className="flex-1">Properties</span>
        <button aria-label="Minimize" className="w-[45px]"><Minus className="mx-auto size-3.5" strokeWidth={1.5} /></button>
        <button aria-label="Maximize" className="w-[45px]"><span className="mx-auto block size-2.5 border border-black" /></button>
        <button aria-label="Close" className="w-[46px]"><X className="mx-auto size-4" strokeWidth={1.2} /></button>
      </div>

      <div className="flex items-end pt-[7px] pl-2" role="tablist">
        <button role="tab" className={clsx(tab, 'w-[57px] text-center')}>Summary</button>
        <button role="tab" className={clsx(tab, 'z-10 -mb-px h-[21px]! w-[55px] border-l-0 bg-white! pb-1 text-center')}>Custom</button>
        <button role="tab" className={clsx(tab, 'w-[138px] border-l-0 pl-1 text-left')}>Configuration Properties</button>
        <button role="tab" className={clsx(tab, 'w-[111px] border-l-0 pl-1 text-left')}>Properties Summary</button>
      </div>

      <div className="ml-1.5 border border-r-0 border-[#d9d9d9] bg-white pb-1">
        <div className="flex h-[62px] items-end pr-5 pb-[13px] pl-2.5">
          <button disabled className="h-[21px] w-[82px] border border-[#bfbfbf] bg-[#cccccc] text-[#838383]">Delete</button>
          <div className="ml-auto">
            <label htmlFor="bom-quantity" className="mb-[5px] block">BOM quantity:</label>
            <div className="flex h-[21px] w-[129px] items-center border border-[#0078d7] bg-white pr-1 pl-[5px]">
              <select id="bom-quantity" className="h-[13px] w-[43px] appearance-none bg-[#0078d7] text-[11px] leading-[13px] text-white">
                <option>- None -</option>
              </select>
              <svg viewBox="0 0 10 6" className="ml-auto h-1.5 w-2.5" fill="none" stroke="#444" aria-hidden="true"><path d="M1 .5l4 4 4-4" /></svg>
            </div>
          </div>
          <button className={clsx(button, 'ml-[27px] h-[21px] w-[55px]')}>Edit List</button>
        </div>

        <div className="relative mr-[18px] ml-[3px] h-[174px] border border-t-2 border-l-2 border-[#e3e3e3] border-t-[#828282] border-l-[#828282]">
          <PropertiesTable />
          <span className="absolute top-4 left-8 h-[90px] w-[689px] border-3 border-[#fd4343] shadow-[2px_4px_4px_rgba(0,0,0,0.4),inset_2px_4px_4px_rgba(0,0,0,0.35)]" />
          <svg viewBox="0 0 36 42" className="absolute top-[49px] left-[657px] h-[42px] w-9 drop-shadow-[2px_4px_2px_rgba(0,0,0,0.4)]" aria-hidden="true">
            <path d="M29 4L12 26" stroke="#fd4343" strokeWidth="5" strokeLinecap="round" />
            <path d="M2 40L5 23L17 32z" fill="#fd4343" />
          </svg>
        </div>
      </div>

      <div className="relative flex justify-end gap-[9px] pt-3 pr-[25px] pb-[3px]">
        <button className="h-[23px] w-[73px] bg-[#e1e1e1] text-center outline-2 -outline-offset-2 outline-[#0078d7]">OK</button>
        <button className={clsx(button, 'h-[23px] w-[73px]')}>Cancel</button>
        <button className={clsx(button, 'h-[23px] w-[73px]')}>Help</button>
        <svg viewBox="0 0 12 12" className="absolute right-0 bottom-0 size-3" stroke="#999" aria-hidden="true"><path d="M1 12L12 1M4 12l8-8M7 12l5-5M10 12l2-2" /></svg>
      </div>
    </div>
  );
}

export default function App() {
  return (
    <div className="relative flex min-h-screen flex-col bg-white pb-px font-['Liberation_Sans',sans-serif] text-black">
      <main className="flex flex-1">
        <ModelView />
        <TaskPane />
      </main>
      <div className="ml-[183px] h-px bg-[#828282]" />
      <StepMarker />
      <ContextMenu />
      <SubMenu />
      <PropertiesWindow />
    </div>
  );
}
